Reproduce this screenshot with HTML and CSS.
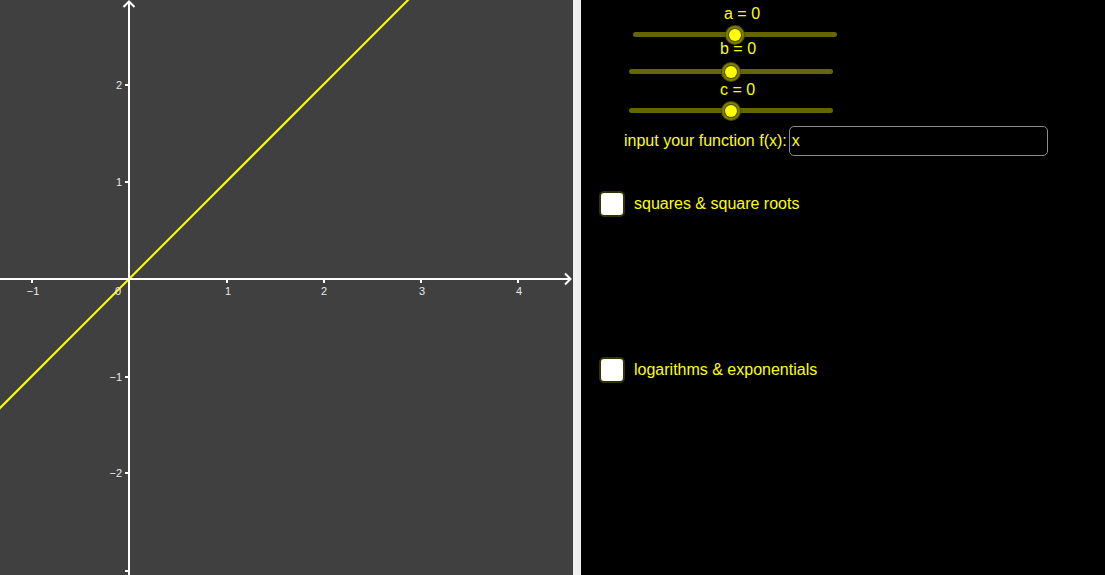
FILE: index.html
```html
<!DOCTYPE html>
<html>
<head>
<meta charset="utf-8">
<link rel="stylesheet" href="styles.css">
</head>
<body>
<div class="app">
  <div class="graphics">
    <svg class="plot" width="573" height="575" viewBox="0 0 573 575">
      <rect x="0" y="0" width="573" height="575" fill="#404040"/>
      <!-- y = x -->
      <line x1="-10" y1="418" x2="420" y2="-12" stroke="#ffff00" stroke-width="2"/>
      <!-- axes -->
      <line x1="0" y1="279" x2="570" y2="279" stroke="#fff" stroke-width="2"/>
      <polyline points="565,273.5 570.5,279 565,284.5" fill="none" stroke="#fff" stroke-width="2"/>
      <line x1="129" y1="575" x2="129" y2="2" stroke="#fff" stroke-width="2"/>
      <polyline points="123.5,7 129,1.5 134.5,7" fill="none" stroke="#fff" stroke-width="2"/>
      <!-- ticks -->
      <g stroke="#fff" stroke-width="2">
        <line x1="32" y1="279" x2="32" y2="283"/>
        <line x1="227" y1="279" x2="227" y2="283"/>
        <line x1="324" y1="279" x2="324" y2="283"/>
        <line x1="421" y1="279" x2="421" y2="283"/>
        <line x1="518" y1="279" x2="518" y2="283"/>
        <line x1="125" y1="85" x2="129" y2="85"/>
        <line x1="125" y1="182" x2="129" y2="182"/>
        <line x1="125" y1="377" x2="129" y2="377"/>
        <line x1="125" y1="473" x2="129" y2="473"/>
        <line x1="125" y1="571" x2="129" y2="571"/>
      </g>
      <g class="ticklabel">
        <text x="33" y="295" text-anchor="middle">−1</text>
        <text x="118" y="295" text-anchor="middle">0</text>
        <text x="228" y="295" text-anchor="middle">1</text>
        <text x="324" y="295" text-anchor="middle">2</text>
        <text x="422" y="295" text-anchor="middle">3</text>
        <text x="519" y="295" text-anchor="middle">4</text>
        <text x="122" y="89" text-anchor="end">2</text>
        <text x="122" y="186" text-anchor="end">1</text>
        <text x="122" y="381" text-anchor="end">−1</text>
        <text x="122" y="477" text-anchor="end">−2</text>
      </g>
    </svg>
  </div>
  <div class="divider"></div>
  <div class="panel">
    <div class="slider slider-a">
      <div class="slider-label">a = 0</div>
      <div class="track"><span class="knob"></span></div>
    </div>
    <div class="slider slider-b">
      <div class="slider-label">b = 0</div>
      <div class="track"><span class="knob"></span></div>
    </div>
    <div class="slider slider-c">
      <div class="slider-label">c = 0</div>
      <div class="track"><span class="knob"></span></div>
    </div>
    <div class="input-row">
      <span class="input-label">input your function f(x):</span>
      <div class="input-box">x</div>
    </div>
    <div class="check-row check-first">
      <span class="checkbox"></span>
      <span class="check-label">squares &amp; square roots</span>
    </div>
    <div class="check-row check-second">
      <span class="checkbox"></span>
      <span class="check-label">logarithms &amp; exponentials</span>
    </div>
  </div>
</div>
</body>
</html>
```
FILE: styles.css
```css
html, body {
  margin: 0;
  padding: 0;
  background: #000;
}
body {
  font-family: "Liberation Sans", Arial, sans-serif;
  width: 1105px;
  height: 575px;
  overflow: hidden;
}
.app {
  display: flex;
  width: 1105px;
  height: 575px;
}
.graphics {
  width: 573px;
  height: 575px;
  flex: none;
  background: #404040;
}
.plot {
  display: block;
}
.ticklabel text {
  font-family: "Liberation Sans", Arial, sans-serif;
  font-size: 11px;
  fill: #e8e8e8;
}
.divider {
  width: 8px;
  flex: none;
  background: #f0f0f0;
}
.panel {
  flex: 1;
  background: #000;
  color: #ffff00;
  font-size: 16px;
  display: flex;
  flex-direction: column;
  align-items: flex-start;
}
.slider {
  width: 204px;
  display: flex;
  flex-direction: column;
}
.slider-label {
  height: 20px;
  line-height: 20px;
  padding-left: 91px;
  white-space: nowrap;
}
.track {
  height: 5px;
  border-radius: 3px;
  background: #666600;
  display: flex;
  justify-content: center;
  align-items: center;
}
.knob {
  width: 12px;
  height: 12px;
  flex: none;
  border-radius: 50%;
  background: #ffff00;
  box-shadow: 0 0 0 1px #4d4d00, 0 0 0 3px #808000, 0 0 0 4px #4d4d00;
}
.slider-a {
  margin-left: 52px;
  margin-top: 4px;
}
.slider-a .track {
  margin-top: 8px;
}
.slider-b {
  margin-left: 48px;
  margin-top: 2px;
}
.slider-b .track {
  margin-top: 10px;
}
.slider-c {
  margin-left: 48px;
  margin-top: 6px;
}
.slider-c .track {
  margin-top: 8px;
}
.input-row {
  margin-left: 43px;
  margin-top: 13px;
  display: flex;
  align-items: center;
  gap: 2px;
}
.input-label {
  white-space: nowrap;
}
.input-box {
  width: 253px;
  height: 28px;
  line-height: 28px;
  border: 1px solid #8c8c8c;
  border-radius: 5px;
  padding-left: 2px;
  padding-right: 2px;
  color: #ffff00;
  background: #000;
}
.check-row {
  margin-left: 18px;
  display: flex;
  align-items: center;
  gap: 9px;
}
.check-first {
  margin-top: 35px;
}
.check-second {
  margin-top: 140px;
}
.checkbox {
  width: 22px;
  height: 22px;
  border: 2px solid #333300;
  border-radius: 5px;
  background: #fff;
  flex: none;
}
.check-label {
  white-space: nowrap;
}
```
